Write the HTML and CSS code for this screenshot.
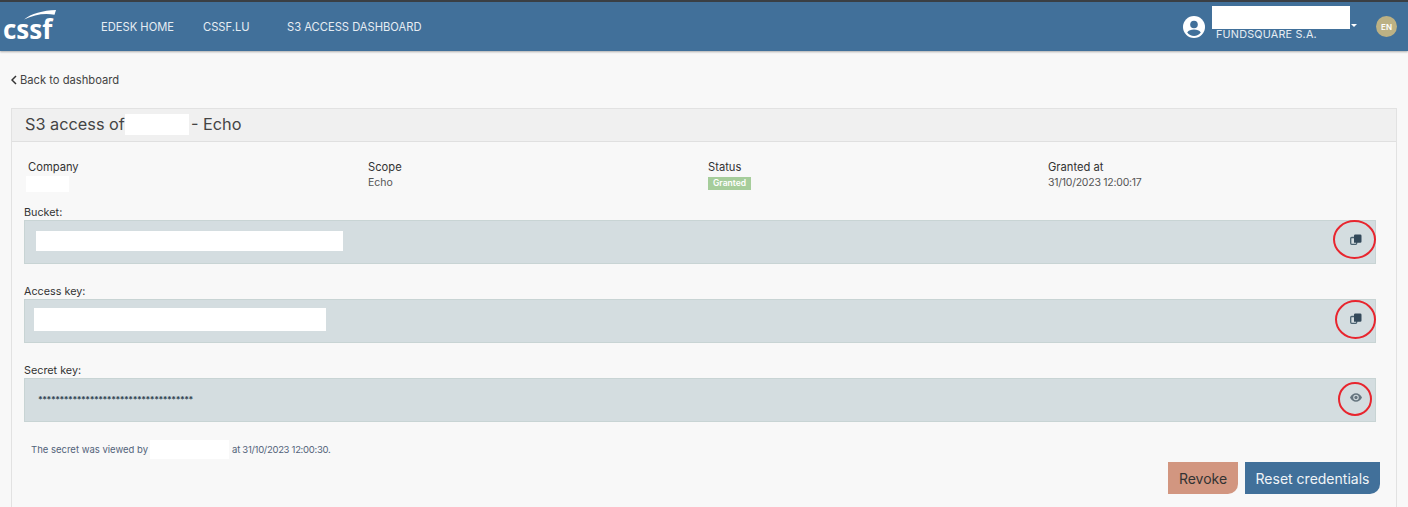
FILE: index.html
```html
<!DOCTYPE html>
<html lang="en">
<head>
<meta charset="utf-8">
<title>S3 access</title>
<link rel="stylesheet" href="styles.css">
</head>
<body>
<header class="topbar">
  <div class="logo">
    <svg class="swoosh" viewBox="0 0 32 10" width="32" height="10"><path d="M0 9.500C7 3.500 19 .5 32 0L30.500 4.800C21 2.800 10 4.500 0 9.500Z" fill="#fff"/></svg>
    <span class="logo-text">cssf</span>
  </div>
  <nav class="nav">
    <a class="nav-link home">EDESK HOME</a>
    <a class="nav-link site">CSSF.LU</a>
    <a class="nav-link">S3 ACCESS DASHBOARD</a>
  </nav>
  <div class="user">
    <svg class="avatar" viewBox="0 0 22 22" width="22" height="22"><circle cx="11" cy="11" r="11" fill="#fff"/><circle cx="11" cy="8.500" r="3.800" fill="#41709a"/><path d="M4.200 16.600C5.600 14.400 8 13.600 11 13.600s5.400.8 6.800 3A8.800 8.800 0 0 1 11 20a8.800 8.800 0 0 1-6.800-3.400Z" fill="#41709a"/></svg>
    <div class="user-info">
      <div class="redact user-name"></div>
      <div class="user-company">FUNDSQUARE S.A.</div>
    </div>
    <span class="caret"></span>
    <span class="lang">EN</span>
  </div>
</header>
<main class="page">
  <a class="back"><svg viewBox="0 0 6 10" width="6" height="10"><path d="M5 1 1 5l4 4" fill="none" stroke="#333" stroke-width="1.500"/></svg>Back to dashboard</a>
  <section class="card">
    <h1 class="card-head">S3 access of<span class="redact title-redact"></span>- Echo</h1>
    <div class="card-body">
      <div class="meta">
        <div><div class="meta-label">Company</div><div class="redact company-redact"></div></div>
        <div><div class="meta-label">Scope</div><div class="meta-value">Echo</div></div>
        <div><div class="meta-label">Status</div><span class="badge">Granted</span></div>
        <div><div class="meta-label">Granted at</div><div class="meta-value date">31/10/2023 12:00:17</div></div>
      </div>
      <div class="field">
        <label class="field-label">Bucket:</label>
        <div class="field-box">
          <div class="redact bucket-redact"></div>
          <svg class="ico" viewBox="0 0 12 11" width="12" height="11"><rect x="0.700" y="3.500" width="6" height="6.800" rx="1" fill="none" stroke="#4a6270" stroke-width="1.300"/><path d="M4 1.800A1.300 1.300 0 0 1 5.300.5h4.900a1.300 1.300 0 0 1 1.300 1.300v5.700a1.300 1.300 0 0 1-1.300 1.300H4Z" fill="#33495a"/></svg>
          <span class="ring ring-a"></span>
        </div>
      </div>
      <div class="field">
        <label class="field-label">Access key:</label>
        <div class="field-box">
          <div class="redact access-redact"></div>
          <svg class="ico" viewBox="0 0 12 11" width="12" height="11"><rect x="0.700" y="3.500" width="6" height="6.800" rx="1" fill="none" stroke="#4a6270" stroke-width="1.300"/><path d="M4 1.800A1.300 1.300 0 0 1 5.300.5h4.900a1.300 1.300 0 0 1 1.300 1.300v5.700a1.300 1.300 0 0 1-1.300 1.300H4Z" fill="#33495a"/></svg>
          <span class="ring ring-a"></span>
        </div>
      </div>
      <div class="field">
        <label class="field-label">Secret key:</label>
        <div class="field-box">
          <div class="secret">************************************</div>
          <svg class="ico" viewBox="0 0 14 10" width="12" height="9"><path fill-rule="evenodd" d="M7 0C4 0 1.400 2 0 5c1.400 3 4 5 7 5s5.600-2 7-5c-1.400-3-4-5-7-5Zm0 8.200A3.200 3.200 0 1 1 7 1.800a3.200 3.200 0 0 1 0 6.400Z" fill="#66757f"/><circle cx="7" cy="5" r="1.900" fill="#66757f"/></svg>
          <span class="ring ring-b"></span>
        </div>
      </div>
      <p class="viewed">The secret was viewed by<span class="redact viewer-redact"></span><span class="viewed-at">at 31/10/2023 12:00:30.</span></p>
      <div class="actions">
        <button class="btn revoke">Revoke</button>
        <button class="btn reset">Reset credentials</button>
      </div>
    </div>
  </section>
</main>
</body>
</html>
```
FILE: styles.css
```css
* { box-sizing: border-box; }
html, body { margin: 0; height: 507px; overflow: hidden; }
body { background: #f8f8f8; font-family: "Inter", "Open Sans", sans-serif; color: #333; }

.redact { background: #fff; }

.topbar {
  height: 51px;
  background: #41709a;
  border-top: 2px solid #3a3f44;
  box-shadow: 0 1px 2px rgba(0,0,0,.3);
  display: flex;
  align-items: center;
  color: #e6edf3;
}
.logo { position: relative; width: 101px; height: 49px; flex: none; }
.swoosh { position: absolute; left: 24px; top: 8px; }
.logo-text {
  position: absolute; left: 3px; top: 9px;
  font: 700 26px/36px "Open Sans", sans-serif;
  color: #fff;
}
.nav { display: flex; font-size: 11.200px; }
.nav-link { white-space: nowrap; }
.home { width: 102px; }
.site { width: 84px; }

.user { margin-left: auto; align-self: stretch; display: flex; align-items: center; padding-right: 11px; }
.avatar { margin-right: 7px; }
.user-info { width: 138px; align-self: flex-start; padding-top: 4px; }
.user-name { height: 23px; }
.user-company { font-size: 10.800px; line-height: 11px; padding-left: 4px; letter-spacing: .2px; }
.caret {
  border-left: 3px solid transparent; border-right: 3px solid transparent;
  border-top: 3px solid #fff; margin-left: 1px; margin-top: -2px;
}
.lang {
  width: 21px; height: 21px; border-radius: 50%; background: #bcb184; color: #fff;
  margin-left: 19px; font-size: 8px; font-weight: 600;
  display: flex; align-items: center; justify-content: center;
}

.page { padding: 23px 11px 0; }
.back { display: flex; align-items: center; gap: 3px; height: 12px; font-size: 11.200px; color: #444; }

.card {
  margin-top: 22px;
  border: 1px solid #e2e2e2;
  border-bottom: 0;
  width: 1386px;
  height: 400px;
}
.card-head {
  margin: 0; height: 33px;
  padding: 0 13px 2px;
  background: #f0f0f0;
  border-bottom: 1px solid #e0e0e0;
  display: flex; align-items: center;
  font-size: 16.300px; font-weight: 400; color: #444;
}
.title-redact { width: 64px; height: 21px; margin-right: 2px; }

.card-body { padding: 18px 20px 0 12px; }
.meta { display: grid; grid-template-columns: repeat(4, 340px); padding-left: 4px; }
.meta-label { font-size: 11.200px; line-height: 15px; color: #333; }
.meta-value { font-size: 10.500px; line-height: 15px; color: #555; }
.date { letter-spacing: -.25px; }
.company-redact { width: 43px; height: 16px; margin: 1px 0 0 -2px; }
.badge {
  display: block; width: fit-content; background: #a6cd9b; color: #fff;
  font-size: 8.500px; font-weight: 600; line-height: 13px; height: 13px; padding: 0 5px; margin-top: 2px;
}

.field { margin-top: 14px; }
.field + .field { margin-top: 21px; }
.field-label { display: block; font-size: 10.800px; line-height: 14px; color: #333; }
.field-box {
  position: relative;
  height: 44px;
  background: #d4dde0;
  border: 1px solid #c8d4d4;
  display: flex; align-items: center; justify-content: space-between;
  padding: 0 13px 0 11px;
}
.ico { margin-top: -5px; }
.bucket-redact { width: 307px; height: 20px; margin-top: -3px; }
.access-redact { width: 292px; height: 23px; margin: -3px 0 0 -2px; }
.secret { font-size: 8.500px; font-weight: 700; color: #2f4452; letter-spacing: -.45px; margin-left: 2px; }
.ring {
  position: absolute;
  border: 2px solid #e8252e;
  border-radius: 50%;
}
.ring-a { right: -1px; top: -1px; width: 43px; height: 39px; }
.ring-b { right: 3px; top: 3px; width: 34px; height: 34px; }
.field:nth-child(3) .ring-a { top: 0; width: 41px; }

.viewed {
  margin: 18px 0 0 7px;
  display: flex; align-items: center;
  font-size: 9.500px; color: #52637a;
}
.viewed-at { letter-spacing: -.3px; }
.viewer-redact { width: 79px; height: 19px; margin: 0 3px 0 2px; }

.actions { display: flex; justify-content: flex-end; gap: 7px; margin-top: 3px; margin-right: -4px; }
.btn {
  height: 32px; border: 0; border-radius: 0 0 10px 0;
  font: 400 14px "Inter", sans-serif;
  padding: 0;
}
.revoke { width: 70px; background: #d29680; color: #333; }
.reset { width: 135px; background: #41709a; color: #f0f4f7; }
```
